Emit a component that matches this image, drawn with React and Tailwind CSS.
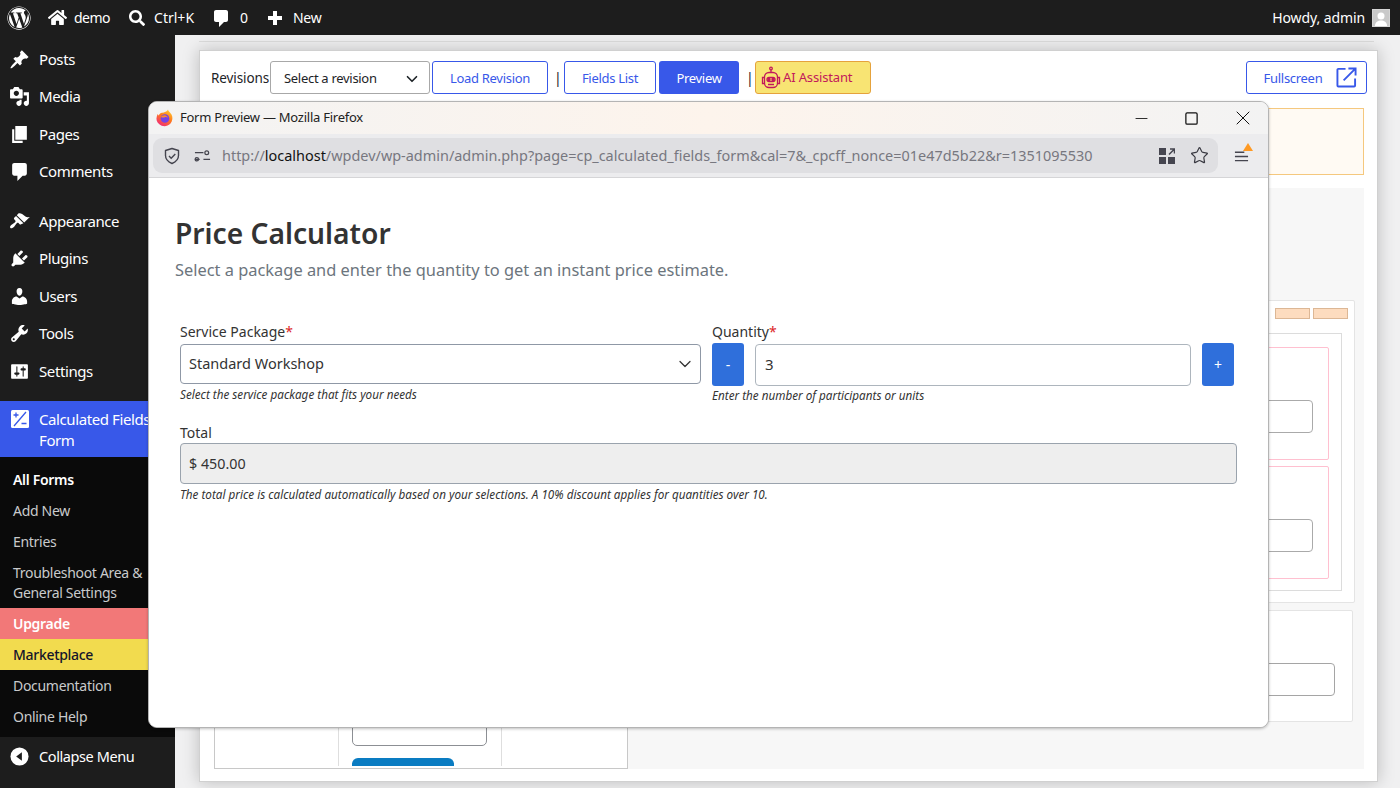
import { Minus, Square, X, Star, ChevronDown } from "lucide-react";
import { FaWordpress, FaHome, FaSearch } from "react-icons/fa";

const ICONS = {
  comments: "M5 2h10c1.1 0 2 .9 2 2v8c0 1.100-.9 2-2 2h-2l-5 5v-5H5c-1.100 0-2-.9-2-2V4c0-1.100.9-2 2-2z",
  plus: "M17 8v4h-5v5H8v-5H3V8h5V3h4v5h5z",
  posts: "M10.44 3.02l1.82-1.82 6.36 6.35-1.83 1.82c-1.05-.68-2.48-.57-3.41.36l-.75.75c-.92.93-1.04 2.35-.35 3.41l-1.83 1.82-2.41-2.41-2.8 2.79c-.42.42-3.38 2.71-3.8 2.29s1.86-3.39 2.28-3.81l2.79-2.79L4.1 9.36l1.83-1.82c1.05.69 2.48.57 3.4-.36l.75-.75c.93-.92 1.05-2.35.36-3.41z",
  media: "M13 11V4c0-.55-.45-1-1-1h-1.67L9 1H5L3.67 3H2c-.55 0-1 .45-1 1v7c0 .55.45 1 1 1h10c.55 0 1-.45 1-1zM7 4.500c1.380 0 2.500 1.120 2.500 2.500S8.380 9.500 7 9.500 4.500 8.380 4.500 7 5.620 4.500 7 4.500zM14 6h5v10.500c0 1.380-1.120 2.500-2.500 2.500S14 17.880 14 16.500s1.120-2.500 2.500-2.500c.17 0 .34.02.5.05V9h-3V6zm-4 8.050V13h2v3.500c0 1.380-1.120 2.500-2.500 2.500S7 17.880 7 16.500 8.120 14 9.500 14c.17 0 .34.02.5.05z",
  pages: "M6 15V2h11v13H6zm-1 1h8v2H3V5h2v11z",
  appearance: "M14.480 11.060L7.410 3.990l1.500-1.500c.5-.56 2.300-.47 3.510.32 1.210.8 1.430 1.280 2.910 2.100 1.180.64 2.450 1.260 4.450.85zm-.71.71L6.700 4.700 4.930 6.470c-.39.39-.39 1.020 0 1.410l1.060 1.060c.39.39.39 1.030 0 1.420-.6.6-1.430 1.110-2.210 1.690-.35.26-.7.53-1.010.84C1.430 13.710.4 15.230 1.320 16.150c.92.92 2.440-.11 3.780-1.450.31-.31.58-.66.84-1.010.58-.78 1.090-1.610 1.690-2.210.39-.39 1.020-.39 1.410 0l1.060 1.060c.39.39 1.020.39 1.410 0z",
  plugins: "M13.110 4.360L9.870 7.600 8 5.730l3.240-3.240c.35-.34 1.050-.2 1.560.32.52.51.66 1.210.31 1.550zm-8 1.770l.91-1.120 9.010 9.010-1.190.84c-.71.71-2.630 1.160-3.820 1.160H6.140L4.900 17.260c-.59.59-1.540.59-2.120 0-.59-.58-.59-1.530 0-2.120l1.240-1.240v-3.880c0-1.130.4-3.190 1.090-3.890zm7.260 3.970l3.240-3.240c.34-.35 1.040-.21 1.550.31.52.51.66 1.210.31 1.550l-3.240 3.250z",
  users: "M10 9.250c-2.270 0-2.730-3.440-2.730-3.440C7 4.020 7.820 2 9.970 2c2.160 0 2.980 2.020 2.710 3.810 0 0-.41 3.440-2.680 3.440zm0 2.570L12.720 10c2.390 0 4.520 2.330 4.520 4.530v2.490s-3.650 1.130-7.240 1.130c-3.650 0-7.240-1.130-7.240-1.130v-2.490c0-2.250 1.940-4.480 4.470-4.480z",
  tools: "M16.680 9.770c-1.340 1.340-3.300 1.670-4.950.99l-5.410 6.520c-.99.99-2.590.99-3.580 0s-.99-2.590 0-3.570l6.520-5.420c-.68-1.650-.35-3.610.99-4.950 1.280-1.280 3.120-1.620 4.720-1.060l-2.890 2.890 2.820 2.820 2.860-2.870c.53 1.580.18 3.390-1.080 4.650zM3.810 16.210c.4.39 1.040.39 1.430 0 .4-.4.4-1.040 0-1.430-.39-.4-1.030-.4-1.430 0-.39.39-.39 1.030 0 1.430z",
  settings: "M18 16V4c0-.55-.45-1-1-1H3c-.55 0-1 .45-1 1v12c0 .55.45 1 1 1h14c.55 0 1-.45 1-1zM8 11h1c.55 0 1 .45 1 1s-.45 1-1 1H8v1.500c0 .28-.22.5-.5.5s-.5-.22-.5-.5V13H6c-.55 0-1-.45-1-1s.45-1 1-1h1V5.500c0-.28.22-.5.5-.5s.5.22.5.5V11zm5-2h-1c-.55 0-1-.45-1-1s.45-1 1-1h1V5.500c0-.28.22-.5.5-.5s.5.22.5.5V7h1c.55 0 1 .45 1 1s-.45 1-1 1h-1v5.500c0 .28-.22.5-.5.5s-.5-.22-.5-.5V9z",
};

function Dash({ name, size = 20, className = "" }) {
  return (
    <svg viewBox="0 0 20 20" width={size} height={size} fill="currentColor" className={className}>
      <path d={ICONS[name]} fillRule="evenodd" />
    </svg>
  );
}

function CalcIcon() {
  return (
    <svg viewBox="0 0 20 20" width="20" height="20" className="shrink-0">
      <rect x="1" y="1" width="18" height="18" rx="1.500" fill="#fff" />
      <path d="M3.500 6h5M6 3.500v5M11.500 14.500h5M4 17L16 3" stroke="#3858e9" strokeWidth="1.300" fill="none" />
    </svg>
  );
}

function FirefoxLogo() {
  return (
    <svg viewBox="0 0 18 18" width="18" height="18">
      <defs>
        <linearGradient id="ffa" x1="0.8" y1="0" x2="0.2" y2="1">
          <stop offset="0" stopColor="#ffcb2f" />
          <stop offset="0.45" stopColor="#ff7a1c" />
          <stop offset="1" stopColor="#f0247e" />
        </linearGradient>
      </defs>
      <path d="M12 .5c.2 2 2 2.500 3.500 5 1.500 2.700 1.300 6.500-1.200 9.300-3 3-8 3.200-11 .5C.5 13.200 0 10 .8 7.500c.2-1 .7-2 1.200-2.700 0 1 .3 1.500.8 1.800C3.200 5 4.500 3.900 6 3.700c2.500-.3 5-1 6-3.200z" fill="url(#ffa)" />
      <circle cx="9" cy="9.500" r="4.300" fill="#7542e5" />
      <path d="M5 8c1-1.600 3-2.300 4.800-1.500 1 .4 1.800 1.300 2 2.300-1-.9-2.500-1-3.300-.4-1.400.3-2.500.2-3.500-.4z" fill="#ff8a2b" />
    </svg>
  );
}

function RobotIcon() {
  return (
    <svg viewBox="0 0 20 24" width="20" height="24" fill="none" stroke="#c2185b" strokeWidth="1.300">
      <circle cx="10" cy="2.500" r="1.300" />
      <path d="M10 3.800V6.500" />
      <rect x="3.500" y="6.500" width="13" height="15" rx="4.500" />
      <path d="M3.500 11.500H1.500v6h2M16.500 11.500h2v6h-2M7 18.500h6" />
      <rect x="6" y="11.500" width="8" height="4" rx="2" />
      <circle cx="8" cy="13.500" r="1" fill="#c2185b" />
      <circle cx="12" cy="13.500" r="1" fill="#c2185b" />
    </svg>
  );
}

const mainMenuTop = [
  { icon: "posts", label: "Posts" },
  { icon: "media", label: "Media" },
  { icon: "pages", label: "Pages" },
  { icon: "comments", label: "Comments" },
];

const mainMenuBottom = [
  { icon: "appearance", label: "Appearance" },
  { icon: "plugins", label: "Plugins" },
  { icon: "users", label: "Users" },
  { icon: "tools", label: "Tools" },
  { icon: "settings", label: "Settings" },
];

function MenuItem({ icon, label }) {
  return (
    <div className="h-[37.5px] flex items-center pl-[9px] gap-[9px] text-[15px] tracking-[-0.4px] text-white">
      <Dash name={icon} size={21} className="shrink-0" />
      <span className="mt-[-1px]">{label}</span>
    </div>
  );
}

function Sidebar() {
  return (
    <aside className="w-[175px] shrink-0 bg-[#1d1d1d] flex flex-col overflow-hidden">
      <div className="pt-[5.5px]">
        {mainMenuTop.map((m) => (
          <MenuItem key={m.label} {...m} />
        ))}
      </div>
      <div className="mt-[12px]">
        {mainMenuBottom.map((m) => (
          <MenuItem key={m.label} {...m} />
        ))}
      </div>
      <div className="mt-[11px] h-[56px] bg-[#3858e9] flex pl-[10px] pt-[8px] gap-[9px] text-white text-[15px] tracking-[-0.4px] leading-[21px]">
        <CalcIcon />
        <span className="whitespace-nowrap">
          Calculated Fields
          <br />
          Form
        </span>
      </div>
      <div className="h-[280px] bg-[#0a0a0a] pt-[7px] text-[14px] tracking-[-0.3px] text-[#c9cacc]">
        <div className="h-[31px] pl-[13px] flex items-center text-white font-semibold">All Forms</div>
        <div className="h-[31px] pl-[13px] flex items-center">Add New</div>
        <div className="h-[31px] pl-[13px] flex items-center">Entries</div>
        <div className="h-[51px] pl-[13px] flex items-center leading-[20px] whitespace-nowrap">
          <span>
            Troubleshoot Area &amp;
            <br />
            General Settings
          </span>
        </div>
        <div className="h-[31px] pl-[13px] flex items-center bg-[#f27878] text-white font-semibold">Upgrade</div>
        <div className="h-[31px] pl-[13px] flex items-center bg-[#f2db4e] text-[#14142b] font-medium">Marketplace</div>
        <div className="h-[31px] pl-[13px] flex items-center">Documentation</div>
        <div className="h-[31px] pl-[13px] flex items-center">Online Help</div>
      </div>
      <div className="flex-1 flex items-start pt-[9px] pl-[10px] gap-[10px] text-[14.5px] tracking-[-0.4px] text-white">
        <svg viewBox="0 0 20 20" width="19" height="19" className="shrink-0 mt-[1px]">
          <circle cx="10" cy="10" r="9.500" fill="#fff" />
          <path d="M12.500 5.500v9L6.500 10z" fill="#1d1d1d" />
        </svg>
        <span>Collapse Menu</span>
      </div>
    </aside>
  );
}

function TopBar() {
  return (
    <header className="h-[35px] shrink-0 bg-[#1d1d1d] text-white text-[14px] tracking-[-0.2px] flex items-center pl-[7px] pr-[10px]">
      <FaWordpress size={24} />
      <FaHome size={19} className="ml-[17px]" />
      <span className="ml-[7px] tracking-[-0.5px]">demo</span>
      <FaSearch size={16} className="ml-[19px]" />
      <span className="ml-[9px] tracking-normal">Ctrl+K</span>
      <Dash name="comments" size={20} className="ml-[17px]" />
      <span className="ml-[9px]">0</span>
      <Dash name="plus" size={20} className="ml-[17px]" />
      <span className="ml-[8px]">New</span>
      <span className="ml-auto tracking-[-0.1px]">Howdy, admin</span>
      <div className="ml-[7px] w-[18px] h-[18px] bg-[#c9c9c9] border border-[#d5d5d5] flex items-end justify-center overflow-hidden">
        <svg viewBox="0 0 16 16" width="16" height="16" fill="#fff">
          <circle cx="8" cy="6" r="3.500" />
          <path d="M2 16c0-4 3-5.500 6-5.500s6 1.500 6 5.500z" />
        </svg>
      </div>
    </header>
  );
}

function OutlineBtn({ children, className = "" }) {
  return (
    <div className={`h-[33px] pt-[2px] flex items-center justify-center rounded-[3px] border border-[#3858e9] text-[#3858e9] bg-white text-[13px] tracking-[-0.3px] ${className}`}>
      {children}
    </div>
  );
}

function BackgroundPage() {
  return (
    <main className="flex-1 bg-[#f0f0f1] pt-[6px] pl-[24px] pr-[22px] pb-[6px] flex flex-col min-w-0">
      <div className="h-[9px] shrink-0 border-t border-[#dcdcdc] mr-[4px]" />
      <div className="flex-1 bg-white border border-[#d0d0d0] shadow-[0_0_16px_rgba(0,0,0,0.22)] pl-[11px] pr-[10px] pb-[12px] flex flex-col">
        <div className="h-[57px] flex items-start pt-[10px] text-[14px] text-[#1d2327]">
          <span className="w-[59px] h-[33px] pt-[1px] flex items-center text-[13.5px] tracking-[-0.1px]">Revisions</span>
          <div className="w-[160px] h-[33px] pt-[2px] rounded-[3px] border border-[#a8a8a8] flex items-center justify-between pl-[13px] pr-[8px] text-[13px] tracking-[-0.3px]">
            Select a revision
            <ChevronDown size={18} strokeWidth={2.200} />
          </div>
          <OutlineBtn className="w-[116px] ml-[2px]">Load Revision</OutlineBtn>
          <span className="ml-[6px] w-[4px] h-[33px] flex items-center">|</span>
          <OutlineBtn className="w-[92px] ml-[6px]">Fields List</OutlineBtn>
          <div className="w-[80px] h-[33px] pt-[2px] ml-[3px] rounded-[3px] bg-[#3858e9] text-white flex items-center justify-center text-[13px] tracking-[-0.3px]">Preview</div>
          <span className="ml-[7px] w-[4px] h-[33px] flex items-center">|</span>
          <div className="w-[116px] h-[33px] ml-[5px] pl-[5px] rounded-[3px] bg-[#f8e473] border border-[#e5a23c] text-[#c2185b] flex items-center gap-[2px] text-[13px] tracking-[-0.15px]">
            <RobotIcon />
            AI Assistant
          </div>
          <OutlineBtn className="w-[121px] ml-auto gap-[14px] pl-[8px]">
            Fullscreen
            <svg viewBox="0 0 22 22" width="21" height="21" fill="none" stroke="#3858e9" strokeWidth="2" className="mt-[-2px]">
              <path d="M10 2H2.500a1 1 0 0 0-1 1v16.500a1 1 0 0 0 1 1H19a1 1 0 0 0 1-1V12M8 14L20 2M13 1.500h7.500V9" />
            </svg>
          </OutlineBtn>
        </div>
        <div className="w-[1150px] ml-[3px] h-[67px] bg-[#fffaf3] border border-[#f5c87e]" />
        <div className="w-[1150px] ml-[3px] flex-1 mt-[13px] bg-[#f7f7f7] flex">
          <div className="w-[414px] border border-[#c8c8c8] bg-white flex">
            <div className="w-[124px] border-r border-[#dedede] mb-[2px]" />
            <div className="w-[163px] border-r border-[#dedede] mb-[2px] flex flex-col justify-end pl-[13px]">
              <div className="w-[135px] h-[40px] border border-[#8c8f94] rounded-[5px]" />
              <div className="w-[102px] h-[8px] mt-[12px] bg-[#0a7cc2] rounded-t-[6px]" />
            </div>
          </div>
          <div className="flex-1 pl-[12px] pr-[9px] pt-[112px] flex flex-col">
            <div className="h-[303px] bg-white border border-[#e4e4e4] rounded-[2px] pr-[12px] pl-[12px] pt-[7px]">
              <div className="flex justify-end gap-[3px] mr-[-6px]">
                <div className="w-[35px] h-[11px] bg-[#fddcbf] border border-[#dcb795]" />
                <div className="w-[35px] h-[11px] bg-[#fddcbf] border border-[#dcb795]" />
              </div>
              <div className="mt-[14px] h-[258px] border border-[#dcdcdc] px-[12px] pt-[13px]">
                <div className="h-[113px] border border-[#ffc0d0] rounded-[2px] pr-[15px] flex items-center justify-end">
                  <div className="w-[300px] h-[33px] mt-[25px] border border-[#aaa] rounded-[4px]" />
                </div>
                <div className="h-[113px] mt-[6px] border border-[#ffc0d0] rounded-[2px] pr-[15px] flex items-center justify-end">
                  <div className="w-[300px] h-[33px] mt-[25px] border border-[#aaa] rounded-[4px]" />
                </div>
              </div>
            </div>
            <div className="h-[112px] mt-[7px] mr-[2px] bg-white border border-[#e4e4e4] rounded-[2px] pr-[17px] flex items-center justify-end">
              <div className="w-[400px] h-[33px] mt-[27px] border border-[#a5a5a5] rounded-[4px]" />
            </div>
          </div>
        </div>
      </div>
    </main>
  );
}

function PreviewWindow() {
  return (
    <div className="absolute left-[148px] top-[101px] w-[1121px] h-[627px] bg-white rounded-[9px] border border-[#b4b4b4] overflow-hidden flex flex-col shadow-[0_1px_3px_rgba(0,0,0,0.25)]">
      {/* title bar */}
      <div className="h-[32px] shrink-0 bg-linear-to-r from-[#f3f3f3] via-[#fdf4ec] to-[#f3f3f3] flex items-center pl-[7px] text-[13px] tracking-[-0.25px] text-[#222]">
        <FirefoxLogo />
        <span className="ml-[6px]">Form Preview — Mozilla Firefox</span>
        <div className="ml-auto flex items-center text-[#111]">
          <Minus size={19} strokeWidth={1.100} />
          <Square size={15} strokeWidth={2} className="ml-[33px] mr-[1px]" />
          <X size={24} strokeWidth={1} className="ml-[31px] mr-[13px]" />
        </div>
      </div>
      {/* toolbar */}
      <div className="h-[44px] shrink-0 bg-[#ececee] border-b border-[#d5d5d7] flex items-center pl-[4px]">
        <div className="w-[1065px] h-[35px] rounded-[9px] bg-[#dfdfe2] flex items-center pl-[10px] pr-[9px] text-[#5b5b66]">
          <svg viewBox="0 0 18 18" width="18" height="18" fill="none" stroke="#45454f" strokeWidth="1.400">
            <path d="M9 1.500l6.500 2v5c0 4-3 6.500-6.500 8-3.500-1.500-6.500-4-6.500-8v-5z" strokeLinejoin="round" />
            <path d="M6 9l2.200 2.200L12.300 7" />
          </svg>
          <svg viewBox="0 0 18 18" width="17" height="17" fill="none" stroke="#45454f" strokeWidth="1.300" className="ml-[13px]">
            <path d="M1 6h9M1 13h5M10 13h7" />
            <circle cx="13.500" cy="6" r="2" />
            <circle cx="3" cy="13" r="1.800" />
          </svg>
          <span className="ml-[11px] text-[14.44px] text-[#77777f] whitespace-nowrap">
            http://<span className="text-[#111]">localhost</span>/wpdev/wp-admin/admin.php?page=cp_calculated_fields_form&amp;cal=7&amp;_cpcff_nonce=01e47d5b22&amp;r=1351095530
          </span>
          <div className="ml-auto flex items-center">
            <svg viewBox="0 0 16 16" width="16" height="16" fill="#45454f" className="ml-[1px]">
              <rect x="0" y="0" width="7" height="7" />
              <rect x="0" y="9" width="7" height="7" />
              <rect x="9" y="9" width="7" height="7" />
              <path d="M10 6.500L15 1.500M11 1h4.500v4.500" fill="none" stroke="#45454f" strokeWidth="1.500" />
            </svg>
            <Star size={19} strokeWidth={1.500} className="ml-[15px] text-[#3a3a42]" />
          </div>
        </div>
        <div className="ml-[16px] relative">
          <svg viewBox="0 0 16 14" width="15" height="14" fill="none" stroke="#45454f" strokeWidth="1.400">
            <path d="M1 3h10M1 7.500h14M1 12h14" />
          </svg>
          <div className="absolute top-[-6px] right-[-4px] w-0 h-0 border-l-[5px] border-r-[5px] border-b-[8px] border-l-transparent border-r-transparent border-b-[#ff9a24]" />
        </div>
      </div>
      {/* form */}
      <div className="flex-1 bg-white pl-[26px] pr-[31px] pt-[35px] text-[#333]">
        <h1 className="text-[28.2px] leading-[40px] font-semibold text-[#333]">Price Calculator</h1>
        <p className="mt-[6px] text-[16.4px] leading-[22px] text-[#6c757d]">Select a package and enter the quantity to get an instant price estimate.</p>
        <div className="mt-[41px] pl-[5px]">
          <div className="flex gap-[11px]">
            <div className="w-[521px]">
              <div className="text-[14px] leading-[20px]">
                Service Package<span className="text-[#dc2626]">*</span>
              </div>
              <div className="mt-[2px] h-[40px] border border-[#8f98a6] rounded-[4px] flex items-center justify-between pl-[8px] pr-[5px] text-[14.5px]">
                Standard Workshop
                <ChevronDown size={20} strokeWidth={1.500} className="text-[#333]" />
              </div>
              <div className="mt-[1px] text-[11.7px] leading-[18px] italic">Select the service package that fits your needs</div>
            </div>
            <div className="w-[522px]">
              <div className="text-[14px] leading-[20px]">
                Quantity<span className="text-[#dc2626]">*</span>
              </div>
              <div className="mt-[1px] flex items-center">
                <div className="w-[32px] h-[43px] bg-[#2f6fdb] rounded-[3px] text-white text-[14px] flex items-center justify-center">-</div>
                <div className="ml-[11px] w-[436px] h-[42px] border border-[#adb5bd] rounded-[4px] flex items-center pl-[9px] text-[15px]">3</div>
                <div className="ml-[11px] w-[32px] h-[43px] bg-[#2f6fdb] rounded-[3px] text-white text-[14px] flex items-center justify-center">+</div>
              </div>
              <div className="text-[11.7px] leading-[18px] italic">Enter the number of participants or units</div>
            </div>
          </div>
          <div className="mt-[19px] text-[14px] leading-[20px]">Total</div>
          <div className="w-[1057px] h-[41px] bg-[#eeeeee] border border-[#9aa3ad] rounded-[4px] flex items-center pl-[8px] text-[14.3px]">$ 450.00</div>
          <div className="mt-[1px] text-[11.7px] leading-[18px] italic">The total price is calculated automatically based on your selections. A 10% discount applies for quantities over 10.</div>
        </div>
      </div>
    </div>
  );
}

export default function App() {
  return (
    <div className="relative w-[1400px] h-[788px] overflow-hidden flex flex-col font-['Noto_Sans',sans-serif]">
      <TopBar />
      <div className="flex-1 flex min-h-0">
        <Sidebar />
        <BackgroundPage />
      </div>
      <PreviewWindow />
    </div>
  );
}
